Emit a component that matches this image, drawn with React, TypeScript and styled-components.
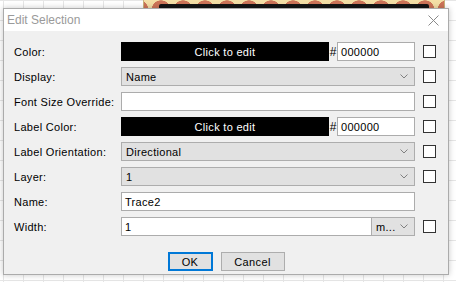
import React from 'react';
import styled, { createGlobalStyle } from 'styled-components';

const Global = createGlobalStyle`
  html, body { margin: 0; padding: 0; }
  body {
    width: 456px; height: 282px; overflow: hidden;
    font-family: "Liberation Sans", Arial, sans-serif;
  }
`;

const Page = styled.div`
  width: 456px;
  height: 282px;
  box-sizing: border-box;
  background-color: #fff;
  background-image:
    linear-gradient(to right, #e6e6e6 1px, transparent 1px),
    linear-gradient(to bottom, #e6e6e6 1px, transparent 1px);
  background-size: 20px 20px;
  background-position: 3px 0;
  display: flex;
  flex-direction: column;
`;

const TopStrip = styled.div`
  height: 8px;
  padding-left: 143px;
  display: flex;
`;

const Ribbon = styled.div`
  width: 302px;
  height: 8px;
  box-sizing: border-box;
  border-left: 1px solid #c9b27a;
  border-right: 1px solid #c9b27a;
  background-color: #f4dfa6;
  background-image: radial-gradient(circle at 50% 120%, #cd7458 0 9px, transparent 9.5px);
  background-size: 22px 8px;
  background-position: 6px 0;
  padding: 4px 15px 0;
`;

const RibbonLine = styled.div`
  height: 4px;
  background: #141414;
  border-radius: 2px 2px 0 0;
`;

const Dialog = styled.div`
  margin-left: 3px;
  width: 446px;
  height: 267px;
  box-sizing: border-box;
  border: 1px solid #ababab;
  background: #f0f0f0;
  box-shadow: 0 0 6px rgba(0, 0, 0, 0.22);
  display: flex;
  flex-direction: column;
`;

const TitleBar = styled.div`
  height: 22px;
  background: #fff;
  display: flex;
  align-items: center;
  justify-content: space-between;
  padding: 0 9px 0 3px;
`;

const Title = styled.span`
  font-size: 12px;
  color: #9a9a9a;
`;

const CloseIcon = styled.svg`
  width: 11px;
  height: 11px;
  display: block;
`;

const Body = styled.div`
  flex: 1;
  padding: 11px 0 0 10px;
  display: flex;
  flex-direction: column;
`;

const Form = styled.div`
  display: flex;
  flex-direction: column;
  gap: 6px;
`;

const Row = styled.div`
  display: flex;
  align-items: center;
  height: 19px;
`;

const Label = styled.div`
  width: 107px;
  font-size: 11px;
  letter-spacing: 0.3px;
  color: #000;
`;

const Field = styled.div`
  width: 294px;
  height: 19px;
  display: flex;
  align-items: stretch;
`;

const ColorBar = styled.div`
  width: 208px;
  background: #000;
  color: #fff;
  font-size: 11px;
  letter-spacing: 0.3px;
  display: flex;
  align-items: center;
  justify-content: center;
`;

const Hash = styled.div`
  width: 8px;
  font-size: 12px;
  display: flex;
  align-items: center;
  justify-content: center;
`;

const TextBox = styled.div<{ $grow?: boolean }>`
  flex: 1;
  box-sizing: border-box;
  background: #fff;
  border: 1px solid #acacac;
  font-size: 11px;
  letter-spacing: 0.3px;
  padding-left: 3px;
  display: flex;
  align-items: center;
`;

const Select = styled.div<{ $width?: number }>`
  ${(p) => (p.$width ? `width: ${p.$width}px; margin-left: -1px;` : 'flex: 1;')}
  box-sizing: border-box;
  background: #e1e1e1;
  border: 1px solid #adadad;
  font-size: 11px;
  letter-spacing: 0.3px;
  padding: 0 6px 0 4px;
  display: flex;
  align-items: center;
  justify-content: space-between;
`;

const Chevron = styled.svg`
  width: 8px;
  height: 5px;
  display: block;
`;

const CheckSlot = styled.div`
  width: 13px;
  margin-left: 8px;
  display: flex;
`;

const CheckBox = styled.div`
  width: 13px;
  height: 13px;
  box-sizing: border-box;
  border: 1px solid #333;
  background: #fff;
`;

const Buttons = styled.div`
  margin-top: 16px;
  margin-left: -10px;
  display: flex;
  justify-content: center;
  gap: 8px;
`;

const Button = styled.div<{ $primary?: boolean; $width: number }>`
  width: ${(p) => p.$width}px;
  height: 19px;
  box-sizing: border-box;
  background: #e1e1e1;
  border: ${(p) => (p.$primary ? '2px solid #0078d7' : '1px solid #adadad')};
  font-size: 11px;
  letter-spacing: 0.4px;
  display: flex;
  align-items: center;
  justify-content: center;
`;

const Down = () => (
  <Chevron viewBox="0 0 8 5">
    <path d="M0.5 0.5 L4 4 L7.5 0.5" fill="none" stroke="#808080" strokeWidth="1" />
  </Chevron>
);

const Check = ({ show = true }: { show?: boolean }) => (
  <CheckSlot>{show && <CheckBox />}</CheckSlot>
);

export default function App() {
  return (
    <Page>
      <Global />
      <TopStrip>
        <Ribbon>
          <RibbonLine />
        </Ribbon>
      </TopStrip>
      <Dialog>
        <TitleBar>
          <Title>Edit Selection</Title>
          <CloseIcon viewBox="0 0 11 11">
            <path d="M0.5 0.5 L10.5 10.5 M10.5 0.5 L0.5 10.5" stroke="#8a8a8a" strokeWidth="1" />
          </CloseIcon>
        </TitleBar>
        <Body>
          <Form>
            <Row>
              <Label>Color:</Label>
              <Field>
                <ColorBar>Click to edit</ColorBar>
                <Hash>#</Hash>
                <TextBox>000000</TextBox>
              </Field>
              <Check />
            </Row>
            <Row>
              <Label>Display:</Label>
              <Field>
                <Select>
                  <span>Name</span>
                  <Down />
                </Select>
              </Field>
              <Check />
            </Row>
            <Row>
              <Label>Font Size Override:</Label>
              <Field>
                <TextBox />
              </Field>
              <Check />
            </Row>
            <Row>
              <Label>Label Color:</Label>
              <Field>
                <ColorBar>Click to edit</ColorBar>
                <Hash>#</Hash>
                <TextBox>000000</TextBox>
              </Field>
              <Check />
            </Row>
            <Row>
              <Label>Label Orientation:</Label>
              <Field>
                <Select>
                  <span>Directional</span>
                  <Down />
                </Select>
              </Field>
              <Check />
            </Row>
            <Row>
              <Label>Layer:</Label>
              <Field>
                <Select>
                  <span>1</span>
                  <Down />
                </Select>
              </Field>
              <Check />
            </Row>
            <Row>
              <Label>Name:</Label>
              <Field>
                <TextBox>Trace2</TextBox>
              </Field>
              <Check show={false} />
            </Row>
            <Row>
              <Label>Width:</Label>
              <Field>
                <TextBox>1</TextBox>
                <Select $width={44}>
                  <span>m...</span>
                  <Down />
                </Select>
              </Field>
              <Check />
            </Row>
          </Form>
          <Buttons>
            <Button $primary $width={45}>OK</Button>
            <Button $width={64}>Cancel</Button>
          </Buttons>
        </Body>
      </Dialog>
    </Page>
  );
}
